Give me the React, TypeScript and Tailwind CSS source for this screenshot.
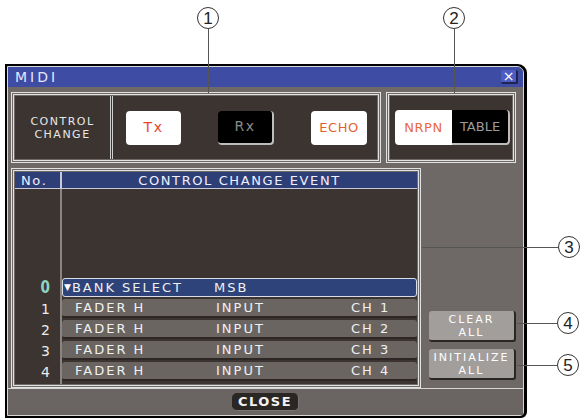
import React from 'react';

const rows = [
  { n: '1', a: 'FADER H', b: 'INPUT', c: 'CH 1' },
  { n: '2', a: 'FADER H', b: 'INPUT', c: 'CH 2' },
  { n: '3', a: 'FADER H', b: 'INPUT', c: 'CH 3' },
  { n: '4', a: 'FADER H', b: 'INPUT', c: 'CH 4' },
];

function Callout({ label, className }: { label: string; className: string }) {
  return (
    <div
      className={`absolute w-[22px] h-[22px] rounded-full border border-[#333] bg-white flex items-center justify-center text-[17px] leading-none text-[#222] font-['Liberation_Sans',sans-serif] ${className}`}
    >
      {label}
    </div>
  );
}

export default function App() {
  return (
    <div className="relative w-[584px] h-[420px] bg-white overflow-hidden font-['DejaVu_Sans',sans-serif]">
      {/* callouts */}
      <Callout label="1" className="left-[197px] top-[7px]" />
      <div className="absolute left-[208px] top-[29px] w-px h-[64px] bg-[#555]" />
      <Callout label="2" className="left-[443px] top-[7px]" />
      <div className="absolute left-[454px] top-[29px] w-px h-[64px] bg-[#555]" />
      <Callout label="3" className="left-[558px] top-[236px]" />
      <div className="absolute left-[422px] top-[247px] w-[136px] h-px bg-[#555]" />
      <Callout label="4" className="left-[557px] top-[312px]" />
      <div className="absolute left-[517px] top-[323px] w-[40px] h-px bg-[#555]" />
      <Callout label="5" className="left-[557px] top-[354px]" />
      <div className="absolute left-[517px] top-[365px] w-[40px] h-px bg-[#555]" />

      {/* window */}
      <div className="ml-[5px] mt-[64px] w-[522px] h-[354px] border-2 border-r-[3px] border-black rounded-tr-[9px] rounded-br-[6px] bg-black">
        <div className="h-full border border-[#d6d6d6] rounded-tr-[7px] rounded-br-[4px] bg-[#6e6966] flex flex-col">
          {/* title bar */}
          <div className="h-[20px] shrink-0 bg-[#3e4ca4] rounded-tr-[6px] flex items-center justify-between pl-[7px] pr-[5px]">
            <span className="text-[14px] leading-none tracking-[3px] text-[#e4e6ff]">MIDI</span>
            <div className="w-[17px] h-[14px] bg-[#4d5cc4] border-r-2 border-b-2 border-[#1e2450] rounded-[2px] flex items-center justify-center text-[14px] leading-none text-white">
              ×
            </div>
          </div>

          <div className="flex-1 flex flex-col px-[3px] pt-[5px]">
            {/* top section */}
            <div className="flex gap-[5px] h-[71px]">
              <div className="w-[370px] border-[3px] border-double border-[#e2e2e2] p-px">
                <div className="h-full bg-[#3b3431] flex">
                  <div className="w-[98px] border-r-[3px] border-double border-[#cfcfcf] flex flex-col items-center justify-center text-[11px] leading-[13px] text-[#e8e8e8] tracking-[1.5px]">
                    <span>CONTROL</span>
                    <span>CHANGE</span>
                  </div>
                  <div className="flex items-center pl-[13px] gap-[37px]">
                    <div className="w-[55px] h-[34px] bg-white rounded-[4px] flex items-center justify-center text-[14px] text-[#e8462a] tracking-[1.5px]">
                      Tx
                    </div>
                    <div className="w-[56px] h-[34px] bg-black rounded-[4px] border-r-2 border-b-2 border-[#bdbdbd] flex items-center justify-center text-[14px] text-[#8a8a8a] tracking-[1.5px]">
                      Rx
                    </div>
                    <div className="w-[56px] h-[34px] bg-white rounded-[4px] flex items-center justify-center text-[13px] text-[#e6602e] tracking-[0.5px]">
                      ECHO
                    </div>
                  </div>
                </div>
              </div>
              <div className="w-[130px] border-[3px] border-double border-[#e2e2e2] p-px">
                <div className="h-full bg-[#3b3431] flex items-center pl-[5px]">
                  <div className="w-[57px] h-[35px] bg-white rounded-l-[4px] flex items-center justify-center text-[13px] text-[#e86a3a] tracking-[0.5px]">
                    NRPN
                  </div>
                  <div className="w-[58px] h-[35px] bg-black rounded-r-[4px] border-r-2 border-b-2 border-[#bdbdbd] flex items-center justify-center text-[13px] text-[#9c9c9c]">
                    TABLE
                  </div>
                </div>
              </div>
            </div>

            {/* list + right panel */}
            <div className="flex mt-[5px] h-[220px]">
              <div className="w-[410px] border-[3px] border-double border-[#e2e2e2] p-px flex flex-col">
                <div className="h-[17px] shrink-0 bg-[#2e3f78] border-b border-[#c8c8d8] flex text-[13px] leading-none text-[#eef0ff] tracking-[1.6px]">
                  <div className="w-[47px] border-r-2 border-[#c8c8d8] flex items-center pl-[6px]">No.</div>
                  <div className="flex-1 flex items-center justify-center">CONTROL CHANGE EVENT</div>
                </div>
                <div className="flex-1 bg-[#3b3431] flex">
                  <div className="w-[47px] border-r-2 border-[#8a8482] flex flex-col justify-end gap-[2px] pb-[3px] pr-[10px]">
                    <div className="h-[19px] flex items-center justify-end text-[17px] font-bold leading-none text-[#8fd4c2] scale-x-[0.8] origin-right">
                      0
                    </div>
                    {rows.map((r) => (
                      <div key={r.n} className="h-[19px] flex items-center justify-end text-[14px] leading-none text-[#ececec]">
                        {r.n}
                      </div>
                    ))}
                  </div>
                  <div className="flex-1 flex flex-col justify-end gap-[2px] pb-[3px] text-[13px] leading-none tracking-[2px] text-[#f0f0f0]">
                    <div className="h-[19px] bg-[#2d437a] border border-[#dcdce8] rounded-[3px] flex items-center pl-px">
                      <span className="text-[9px] tracking-normal mr-[1px] text-white">▼</span>
                      <span className="w-[142px]">BANK SELECT</span>
                      <span>MSB</span>
                    </div>
                    {rows.map((r) => (
                      <div key={r.n} className="h-[19px] bg-[#6b6562] border-b-2 border-[#2c2624] rounded-[3px] flex items-center pl-[13px]">
                        <span className="w-[141px]">{r.a}</span>
                        <span className="w-[135px]">{r.b}</span>
                        <span>{r.c}</span>
                      </div>
                    ))}
                  </div>
                </div>
              </div>

              <div className="flex-1 flex flex-col justify-end gap-[7px] pl-[8px] pb-[8px]">
                <div className="w-[87px] h-[31px] bg-[#a29e9c] border-r-2 border-b-2 border-[#2a2624] rounded-[3px] flex flex-col items-center justify-center text-[11px] leading-[13px] tracking-[2px] text-white">
                  <span>CLEAR</span>
                  <span>ALL</span>
                </div>
                <div className="w-[87px] h-[31px] bg-[#a29e9c] border-r-2 border-b-2 border-[#2a2624] rounded-[3px] flex flex-col items-center justify-center text-[11px] leading-[13px] tracking-[2px] text-white">
                  <span>INITIALIZE</span>
                  <span>ALL</span>
                </div>
              </div>
            </div>

            {/* footer */}
            <div className="mt-auto -mx-[3px] h-[27px] border-t border-[#d6d6d6] bg-[#6a6562] flex items-center justify-center">
              <div className="w-[67px] h-[18px] bg-[#2a2624] rounded-[5px] border-b border-r border-[#777] flex items-center justify-center text-[13px] font-bold tracking-[1.5px] text-[#f2f2f2]">
                CLOSE
              </div>
            </div>
          </div>
        </div>
      </div>
    </div>
  );
}
